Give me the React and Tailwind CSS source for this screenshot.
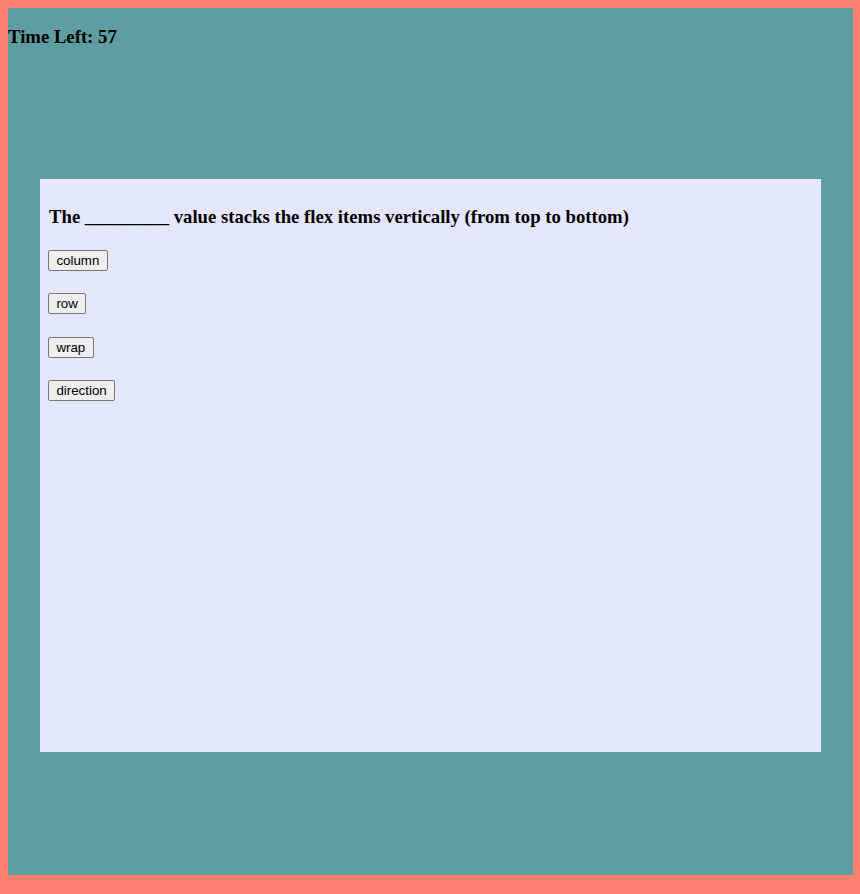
export default function App() {
  const options = ["column", "row", "wrap", "direction"];
  return (
    <div className="w-[860px] h-[894px] bg-[#fa8072] pt-2 pl-2 overflow-hidden">
      <div className="w-[845px] h-[867px] bg-[#5f9ea0] flex flex-col">
        <h3 className="mt-[18px] text-[18.72px] leading-[22px] font-bold text-black font-['Liberation_Serif',serif]">
          Time Left: 57
        </h3>
        <div className="mt-[131px] ml-8 w-[781px] h-[573px] bg-[#e6e6fa] px-2 pt-[27px] flex flex-col items-start">
          <h3 className="ml-px text-[18.72px] leading-[22px] font-bold text-black font-['Liberation_Serif',serif]">
            The _________ value stacks the flex items vertically (from top to bottom)
          </h3>
          <div className="mt-[22px] flex flex-col items-start gap-[22.4px]">
            {options.map((o) => (
              <button
                key={o}
                className="h-[21px] px-[7.4px] border border-[#767676] rounded-[2px] bg-[#efefef] text-[13.33px] leading-[19px] text-black font-['Liberation_Sans',Arial,sans-serif]"
              >
                {o}
              </button>
            ))}
          </div>
        </div>
      </div>
    </div>
  );
}
